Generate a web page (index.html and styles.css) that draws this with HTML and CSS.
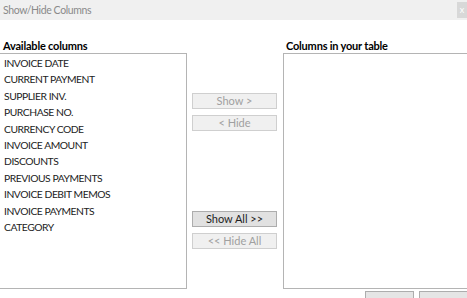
FILE: index.html
```html
<!DOCTYPE html>
<html lang="en">
<head>
    <meta charset="UTF-8">
    <title>Show/Hide Columns</title>
    <link rel="stylesheet" href="styles.css">
</head>
<body>
    <div class="title-bar">
        <span class="title">Show/Hide Columns</span>
        <span class="close-btn">x</span>
    </div>

    <div class="columns">
        <div class="col-left">
            <h4>Available columns</h4>
            <ul class="list-box">
                <li>INVOICE DATE</li>
                <li>CURRENT PAYMENT</li>
                <li>SUPPLIER INV.</li>
                <li>PURCHASE NO.</li>
                <li>CURRENCY CODE</li>
                <li>INVOICE AMOUNT</li>
                <li>DISCOUNTS</li>
                <li>PREVIOUS PAYMENTS</li>
                <li>INVOICE DEBIT MEMOS</li>
                <li>INVOICE PAYMENTS</li>
                <li>CATEGORY</li>
            </ul>
        </div>

        <div class="col-mid">
            <div class="btn-group top">
                <button disabled>Show &gt;</button>
                <button disabled>&lt; Hide</button>
            </div>
            <div class="btn-group bottom">
                <button>Show All &gt;&gt;</button>
                <button disabled>&lt;&lt; Hide All</button>
            </div>
        </div>

        <div class="col-right">
            <h4>Columns in your table</h4>
            <ul class="list-box"></ul>
        </div>
    </div>

    <div class="footer">
        <button class="footer-btn" aria-label="OK"></button>
        <button class="footer-btn" aria-label="Cancel"></button>
    </div>
</body>
</html>
```

FILE: styles.css
```css
body { margin: 0; width: 467px; height: 298px; overflow: hidden; background: #fff; font-family: Lato, "Open Sans", sans-serif; font-size: 11px; color: #1e1e1e; }

.title-bar { height: 20px; background: #f0f0f0; display: flex; align-items: center; justify-content: space-between; padding-left: 3px; }
.title { color: #8a8a8a; font-size: 10.5px; letter-spacing: -0.4px; }
.close-btn { width: 10px; height: 16px; background: #d8d8d8; color: #fff; font-size: 9px; line-height: 16px; text-align: center; }

.columns { display: flex; margin-top: 19px; height: 250px; }
h4 { margin: 0; font-size: 11px; font-weight: bold; height: 14px; line-height: 14px; color: #000; letter-spacing: -0.2px; }

.col-left { width: 187px; display: flex; flex-direction: column; }
.col-left h4 { padding-left: 3px; }
.col-right { flex: 1; display: flex; flex-direction: column; padding-left: 2px; }
.col-right h4 { padding-left: 3px; }

.list-box { flex: 1; margin: 0; padding: 1px 0 0 4px; list-style: none; border: 1px solid #b4b4b4; background: #fff; }
.col-left .list-box { border-left: none; }
.col-right .list-box { border-right: none; }
.list-box li { height: 16.4px; line-height: 16.4px; white-space: nowrap; font-size: 10.3px; letter-spacing: -0.45px; color: #222; }

.col-mid { width: 94px; display: flex; flex-direction: column; padding: 0 4px 0 5px; box-sizing: border-box; }
.btn-group { display: flex; flex-direction: column; gap: 6px; }
.btn-group.top { margin-top: 54px; }
.btn-group.bottom { margin-top: 80px; }

button { height: 16px; padding: 0; font-family: inherit; font-size: 11px; line-height: 14px; border: 1px solid #adadad; background: #e1e1e1; color: #1e1e1e; border-radius: 0; }
button:disabled { border-color: #cfcfcf; background: #f0f0f0; color: #a0a0a0; }

.footer { display: flex; justify-content: flex-end; gap: 5px; padding-top: 2px; margin-right: -30px; }
.footer-btn { width: 49px; height: 20px; border-color: #adadad; background: #e5e5e5; }
.footer-btn + .footer-btn { width: 78px; }
```
